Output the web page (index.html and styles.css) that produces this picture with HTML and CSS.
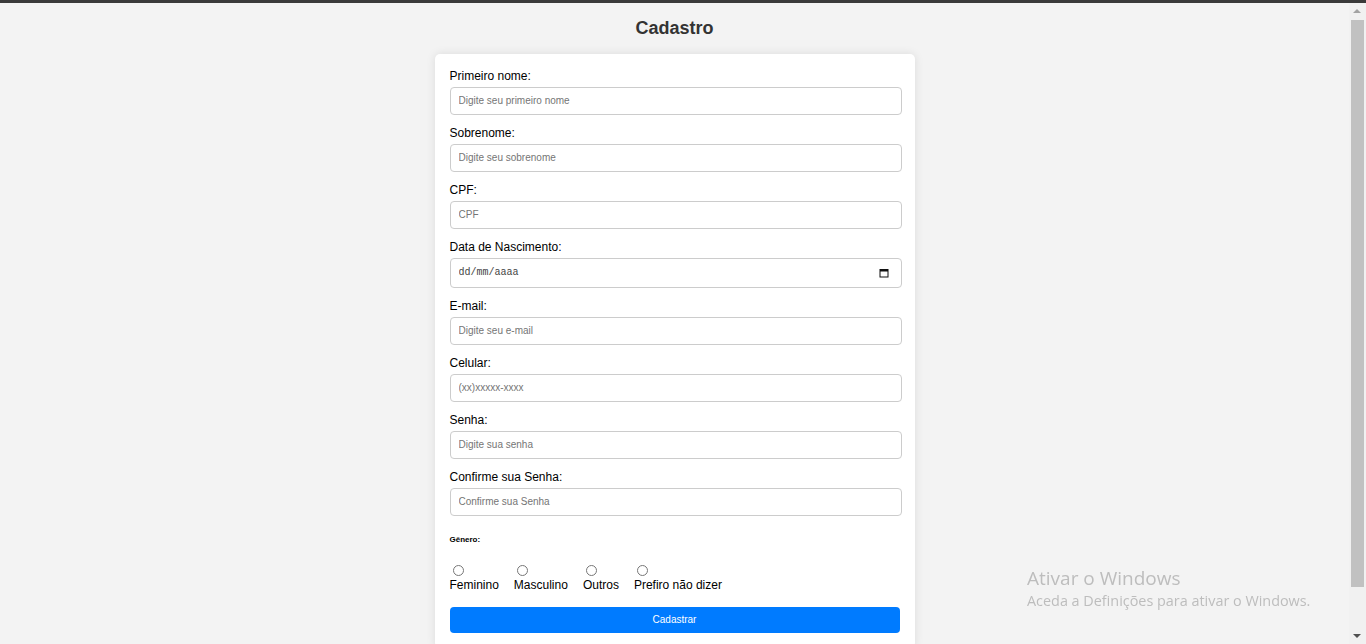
FILE: index.html
```html
<!DOCTYPE html>
<html lang="pt-BR">
<head>
<meta charset="utf-8">
<title>Cadastro</title>
<link rel="stylesheet" href="styles.css">
</head>
<body>
<div class="topbar"></div>
<h2 class="title">Cadastro</h2>
<form class="card">
  <label class="field-label" for="nome">Primeiro nome:</label>
  <input class="field" id="nome" type="text" placeholder="Digite seu primeiro nome">
  <label class="field-label" for="sobrenome">Sobrenome:</label>
  <input class="field" id="sobrenome" type="text" placeholder="Digite seu sobrenome">
  <label class="field-label" for="cpf">CPF:</label>
  <input class="field" id="cpf" type="text" placeholder="CPF">
  <label class="field-label" for="nasc">Data de Nascimento:</label>
  <div class="date-wrap">
    <input class="field field-date" id="nasc" type="text" placeholder="dd/mm/aaaa">
    <svg class="cal-icon" width="10" height="10" viewBox="0 0 10 10" aria-hidden="true">
      <rect x="1" y="1.5" width="8" height="7.5" fill="none" stroke="#111" stroke-width="1"/>
      <rect x="1" y="1" width="8" height="2.5" fill="#111"/>
    </svg>
  </div>
  <label class="field-label" for="email">E-mail:</label>
  <input class="field" id="email" type="email" placeholder="Digite seu e-mail">
  <label class="field-label" for="cel">Celular:</label>
  <input class="field" id="cel" type="text" placeholder="(xx)xxxxx-xxxx">
  <label class="field-label" for="senha">Senha:</label>
  <input class="field" id="senha" type="password" placeholder="Digite sua senha">
  <label class="field-label" for="senha2">Confirme sua Senha:</label>
  <input class="field" id="senha2" type="password" placeholder="Confirme sua Senha">
  <h6 class="gender-title">Gênero:</h6>
  <div class="options">
    <div class="option"><input class="radio" type="radio" id="fem" name="genero"><label class="option-label" for="fem">Feminino</label></div>
    <div class="option"><input class="radio" type="radio" id="masc" name="genero"><label class="option-label" for="masc">Masculino</label></div>
    <div class="option"><input class="radio" type="radio" id="out" name="genero"><label class="option-label" for="out">Outros</label></div>
    <div class="option"><input class="radio" type="radio" id="nd" name="genero"><label class="option-label" for="nd">Prefiro não dizer</label></div>
  </div>
  <button class="submit" type="button">Cadastrar</button>
</form>
<div class="scrollbar" aria-hidden="true">
  <div class="sb-arrow sb-up"></div>
  <div class="sb-track"><div class="sb-thumb"></div></div>
  <div class="sb-arrow sb-down"></div>
</div>
<div class="watermark">
  <div class="wm-title">Ativar o Windows</div>
  <div class="wm-sub">Aceda a Definições para ativar o Windows.</div>
</div>
</body>
</html>
```
FILE: styles.css
```css
html, body {
  margin: 0;
  padding: 0;
}
body {
  background: #f3f3f3;
  font-family: "Liberation Sans", Arial, sans-serif;
  color: #000;
  padding: 0 17px 45px 0;
}
.topbar {
  position: fixed;
  top: 0;
  left: 0;
  right: 0;
  height: 3px;
  background: #3a3a3a;
  z-index: 3;
}
.title {
  margin: 0;
  padding: 18px 0 15px;
  text-align: center;
  font-size: 18px;
  line-height: 21px;
  font-weight: bold;
  color: #333;
}
.card {
  box-sizing: border-box;
  width: 480px;
  margin: 0 auto;
  background: #fff;
  border-radius: 5px;
  box-shadow: 0 0 10px rgba(0, 0, 0, 0.1);
  padding: 14px 15px 15px;
}
.field-label {
  display: block;
  font-size: 12px;
  line-height: 17px;
  margin-bottom: 2px;
  color: #000;
}
.field {
  display: block;
  box-sizing: border-box;
  width: calc(100% + 2px);
  height: 28px;
  margin: 0 0 10px;
  padding: 0 8px 2px;
  border: 1px solid #ccc;
  border-radius: 4px;
  background: #fff;
  font-family: "Liberation Sans", Arial, sans-serif;
  font-size: 10px;
  color: #333;
}
.field::placeholder {
  color: #757575;
}
.date-wrap {
  position: relative;
}
.field-date {
  height: 30px;
  padding: 0 8px 1px;
  font-family: "Liberation Mono", "Courier New", monospace;
}
.field-date::placeholder {
  color: #444;
}
.cal-icon {
  position: absolute;
  right: 11px;
  top: 10px;
}
.gender-title {
  font-size: 8px;
  line-height: 9px;
  font-weight: bold;
  margin: 19px 0 21px;
}
.options {
  display: flex;
  gap: 15px;
}
.option {
  display: flex;
  flex-direction: column;
  align-items: flex-start;
}
.radio {
  width: 11px;
  height: 11px;
  margin: 0 0 2px 3px;
}
.option-label {
  font-size: 12px;
  line-height: 14px;
}
.submit {
  display: block;
  width: 100%;
  height: 26px;
  margin-top: 15px;
  padding: 0 0 2px;
  border: none;
  border-radius: 4px;
  background: #007bff;
  color: #fff;
  font-family: "Liberation Sans", Arial, sans-serif;
  font-size: 10px;
}
.scrollbar {
  position: fixed;
  top: 3px;
  right: 0;
  bottom: 0;
  width: 17px;
  background: #f1f1f1;
  display: flex;
  flex-direction: column;
  z-index: 2;
}
.sb-arrow {
  height: 17px;
  flex: none;
  position: relative;
}
.sb-arrow::after {
  content: "";
  position: absolute;
  left: 4px;
  width: 0;
  height: 0;
  border-left: 4px solid transparent;
  border-right: 4px solid transparent;
}
.sb-up::after {
  top: 6px;
  border-bottom: 4px solid #a3a3a3;
}
.sb-down::after {
  top: 7px;
  border-top: 4px solid #505050;
}
.sb-track {
  flex: 1;
  padding: 0 2px;
}
.sb-thumb {
  margin-top: 0;
  height: 567px;
  background: #c1c1c1;
}
.watermark {
  position: fixed;
  left: 1027px;
  top: 565px;
  color: #bdbdbd;
  font-family: "Open Sans", "Noto Sans", sans-serif;
  pointer-events: none;
  z-index: 1;
}
.wm-title {
  font-size: 19px;
  line-height: 26px;
}
.wm-sub {
  font-size: 14.4px;
  line-height: 20px;
}
```
